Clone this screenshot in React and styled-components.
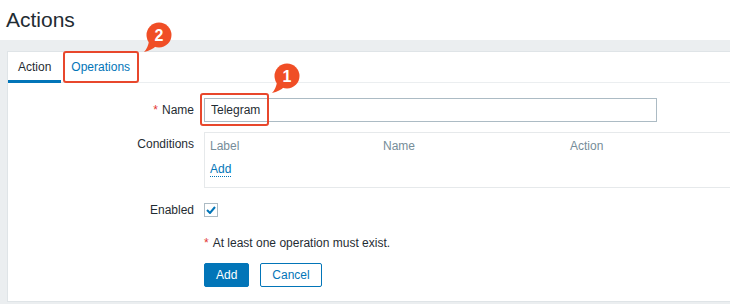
import React from 'react';
import styled, { createGlobalStyle } from 'styled-components';

const GlobalStyle = createGlobalStyle`
  body {
    margin: 0;
    background: #ffffff;
    font-family: "Liberation Sans", Arial, sans-serif;
    font-size: 12px;
    color: #1f2c33;
    overflow: hidden;
  }
`;

const Header = styled.header`
  height: 40px;
  display: flex;
  align-items: center;
  padding-left: 6px;
`;

const Title = styled.h1`
  margin: 0;
  font-size: 21px;
  font-weight: normal;
  color: #1f2c33;
`;

const Content = styled.main`
  background: #ebeef0;
  padding: 11px 0 3px 7px;
`;

const Panel = styled.section`
  background: #ffffff;
  border: 1px solid #dfe4e7;
  border-right: none;
  position: relative;
`;

const TabBar = styled.nav`
  display: flex;
  height: 30px;
  border-bottom: 1px solid #ebeef0;
`;

const Tab = styled.div`
  position: relative;
  padding: 0 10px;
  display: flex;
  align-items: center;
  box-sizing: border-box;
  height: 31px;
  color: ${p => (p.active ? '#1f2c33' : '#0275b8')};
  border-bottom: 3px solid ${p => (p.active ? '#0275b8' : 'transparent')};
  padding-top: 2px;
`;

const Mark = styled.span`
  position: absolute;
  border: 2px solid #e8472c;
  border-radius: 3px;
  pointer-events: none;
`;

const TabMark = styled(Mark)`
  left: 2px;
  right: 1px;
  top: -1px;
  bottom: -3px;
`;

const InputMark = styled(Mark)`
  left: -4px;
  top: -5px;
  width: 65px;
  height: 29px;
`;

const BadgeBox = styled.span`
  position: absolute;
  left: ${p => p.left}px;
  top: ${p => p.top}px;
  width: 30px;
  height: 30px;
`;

const Form = styled.form`
  display: grid;
  grid-template-columns: 186px 1fr;
  column-gap: 10px;
  row-gap: 10px;
  padding: 15px 0 14px;
`;

const Label = styled.label`
  text-align: right;
  line-height: 24px;
  color: #1f2c33;
`;

const Required = styled.span`
  color: #e33734;
  margin-right: 4px;
`;

const Field = styled.div`
  display: flex;
  align-items: ${p => (p.top ? 'flex-start' : 'center')};
  min-height: ${p => p.height || 24}px;
`;

const InputWrap = styled.div`
  position: relative;
`;

const TextInput = styled.input`
  box-sizing: border-box;
  width: 453px;
  height: 24px;
  border: 1px solid #acbbc4;
  padding: 0 6px;
  font-family: inherit;
  font-size: 12px;
  color: #1f2c33;
  outline: none;
`;

const ConditionsBox = styled.div`
  box-sizing: border-box;
  width: 560px;
  border: 1px solid #e6e9eb;
  padding: 1px 5px 7px;
`;

const TableRow = styled.div`
  display: grid;
  grid-template-columns: 173px 187px 1fr;
  height: ${p => p.height}px;
  align-items: center;
`;

const HeadCell = styled.span`
  color: #768d99;
`;

const LinkButton = styled.span`
  color: #0275b8;
  border-bottom: 1px dotted #0275b8;
  justify-self: start;
  line-height: 14px;
`;

const Checkbox = styled.span`
  box-sizing: border-box;
  width: 14px;
  height: 14px;
  border: 1px solid #acbbc4;
  display: flex;
  align-items: center;
  justify-content: center;
`;

const Message = styled.div`
  grid-column: 2;
  height: 21px;
  display: flex;
  align-items: center;
`;

const Buttons = styled.div`
  grid-column: 2;
  display: flex;
  gap: 11px;
`;

const Button = styled.button`
  box-sizing: border-box;
  height: 24px;
  padding: 0 11px;
  font-family: inherit;
  font-size: 12px;
  border-radius: 2px;
  border: 1px solid #0275b8;
  background: ${p => (p.primary ? '#0275b8' : '#ffffff')};
  color: ${p => (p.primary ? '#ffffff' : '#0275b8')};
`;

const Badge = ({ n, left, top }) => (
  <BadgeBox left={left} top={top}>
    <svg width="30" height="30" viewBox="0 0 30 30">
      <path d="M6 19 Q5 26 1 30 Q9 28 13 24 Z" fill="#f04e26" />
      <circle cx="16" cy="13" r="12.5" fill="#f04e26" />
      <text
        x="16"
        y="18.5"
        textAnchor="middle"
        fill="#ffffff"
        fontSize="16"
        fontWeight="bold"
        fontFamily="Liberation Sans, Arial, sans-serif"
      >
        {n}
      </text>
    </svg>
  </BadgeBox>
);

const App = () => {
  return (
    <>
      <GlobalStyle />
      <Header>
        <Title>Actions</Title>
      </Header>
      <Content>
        <Panel>
          <TabBar>
            <Tab active>Action</Tab>
            <Tab>
              Operations
              <TabMark />
              <Badge n="2" left={82} top={-30} />
            </Tab>
          </TabBar>
          <Form>
            <Label>
              <Required>*</Required>Name
            </Label>
            <Field>
              <InputWrap>
                <TextInput defaultValue="Telegram" />
                <InputMark />
                <Badge n="1" left={67} top={-35} />
              </InputWrap>
            </Field>

            <Label>Conditions</Label>
            <Field top>
              <ConditionsBox>
                <TableRow height={24}>
                  <HeadCell>Label</HeadCell>
                  <HeadCell>Name</HeadCell>
                  <HeadCell>Action</HeadCell>
                </TableRow>
                <TableRow height={22}>
                  <LinkButton>Add</LinkButton>
                </TableRow>
              </ConditionsBox>
            </Field>

            <Label>Enabled</Label>
            <Field>
              <Checkbox>
                <svg width="10" height="8" viewBox="0 0 10 8">
                  <path d="M1 4 L4 7 L9 1" fill="none" stroke="#0275b8" strokeWidth="2" />
                </svg>
              </Checkbox>
            </Field>

            <Message>
              <Required>*</Required>At least one operation must exist.
            </Message>
            <Buttons>
              <Button primary type="button">Add</Button>
              <Button type="button">Cancel</Button>
            </Buttons>
          </Form>
        </Panel>
      </Content>
    </>
  );
};

export default App;
